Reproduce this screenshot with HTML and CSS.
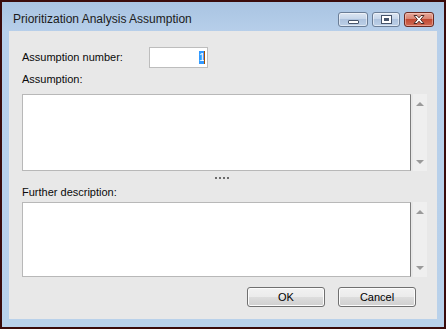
FILE: index.html
```html
<!DOCTYPE html>
<html>
<head>
<meta charset="utf-8">
<link rel="stylesheet" href="styles.css">
</head>
<body>
<div class="window">
  <div class="titlebar">
    <div class="title">Prioritization Analysis Assumption</div>
    <div class="caption-buttons">
      <div class="cap cap-min"><span class="min-glyph"></span></div>
      <div class="cap cap-max"><span class="max-glyph"></span></div>
      <div class="cap cap-close">
        <svg width="16" height="11" viewBox="0 0 16 11">
          <path d="M3 1.5 L6 1.5 L8 3.8 L10 1.5 L13 1.5 L9.6 5.5 L13 9.5 L10 9.5 L8 7.2 L6 9.5 L3 9.5 L6.4 5.5 Z" fill="#ffffff" stroke="#4a2a26" stroke-width="1" stroke-linejoin="round"/>
        </svg>
      </div>
    </div>
  </div>
  <div class="client">
    <div class="row-number">
      <label class="label label-number">Assumption number:</label>
      <div class="num-input"><span class="sel">1</span><span class="caret"></span></div>
    </div>
    <div class="label label-block">Assumption:</div>
    <div class="memo-row memo-1">
      <div class="memo"></div>
      <div class="scrollbar">
        <span class="arrow-up"></span>
        <span class="arrow-down"></span>
      </div>
    </div>
    <div class="splitter"><span></span><span></span><span></span><span></span></div>
    <div class="label label-block2">Further description:</div>
    <div class="memo-row memo-2">
      <div class="memo"></div>
      <div class="scrollbar">
        <span class="arrow-up"></span>
        <span class="arrow-down"></span>
      </div>
    </div>
    <div class="buttons">
      <div class="btn">OK</div>
      <div class="btn">Cancel</div>
    </div>
  </div>
</div>
</body>
</html>
```

FILE: styles.css
```css
html, body {
  margin: 0;
  padding: 0;
  background: #ffffff;
}

.window {
  width: 446px;
  height: 329px;
  box-sizing: border-box;
  border: 2px solid #3a0b0b;
  background: linear-gradient(to bottom, #a9c4e2 0px, #b7cfea 30px, #b9d1ea 100%);
  display: flex;
  flex-direction: column;
  padding: 0 7px 8px 7px;
  font-family: "Liberation Sans", Arial, sans-serif;
}

.titlebar {
  height: 29px;
  display: flex;
  align-items: flex-start;
  justify-content: space-between;
  flex-shrink: 0;
}

.title {
  font-size: 12px;
  color: #1b1b1b;
  padding: 10px 0 0 4px;
  line-height: 15px;
}

.caption-buttons {
  display: flex;
  gap: 4px;
  margin-top: 10px;
  margin-right: 3px;
}

.cap {
  height: 15px;
  box-sizing: border-box;
  border: 1px solid #6a7d96;
  border-radius: 3px;
  display: flex;
  align-items: center;
  justify-content: center;
  background: linear-gradient(to bottom, #dce6f2 0%, #c6d6ea 45%, #aec3de 50%, #bcd0e8 100%);
  box-shadow: inset 0 0 0 1px rgba(255,255,255,0.5);
}

.cap-min { width: 30px; }
.cap-max { width: 28px; }
.cap-close {
  width: 30px;
  border-color: #6b2a22;
  background: linear-gradient(to bottom, #e6a99b 0%, #d98472 45%, #c24a33 50%, #d06b55 100%);
  box-shadow: inset 0 0 0 1px rgba(255,220,210,0.45);
}

.min-glyph {
  width: 9px;
  height: 2px;
  background: #ffffff;
  border: 1px solid #46546a;
  margin-top: 4px;
  border-radius: 1px;
}

.max-glyph {
  width: 5px;
  height: 3px;
  border: 2px solid #ffffff;
  outline: 1px solid #46546a;
  background: #46546a;
}

.client {
  flex: 1;
  background: #e8e8e8;
  padding: 16px 10px 0 13px;
  display: flex;
  flex-direction: column;
  font-family: "Liberation Sans", Arial, sans-serif;
  font-size: 11px;
  color: #0a0a0a;
}

.row-number {
  display: flex;
  align-items: center;
  height: 21px;
}

.label-number {
  width: 127px;
  line-height: 21px;
}

.num-input {
  width: 59px;
  height: 21px;
  box-sizing: border-box;
  border: 1px solid #bdbdbd;
  background: #ffffff;
  display: flex;
  justify-content: flex-end;
  align-items: center;
  padding-right: 2px;
}

.sel {
  background: #3399ff;
  color: #ffffff;
  line-height: 13px;
  width: 5px;
  text-align: center;
  font-size: 11px;
}

.caret {
  width: 1px;
  height: 13px;
  background: #a05000;
}

.label {
  line-height: 15px;
}

.label-block {
  margin-top: 4px;
  height: 15px;
  margin-bottom: 7px;
}

.memo-row {
  display: flex;
  gap: 2px;
}

.memo-1 { height: 77px; }
.memo-2 { height: 75px; }

.memo {
  width: 390px;
  box-sizing: border-box;
  background: #ffffff;
  border: 1px solid #b8b8b8;
  border-right-color: #7c7c7c;
}

.scrollbar {
  width: 14px;
  background: #efefef;
  display: flex;
  flex-direction: column;
  justify-content: space-between;
  align-items: center;
  padding: 8px 0 7px 0;
  box-sizing: border-box;
}

.arrow-up {
  width: 0;
  height: 0;
  border-left: 4px solid transparent;
  border-right: 4px solid transparent;
  border-bottom: 4px solid #9a9a9a;
}

.arrow-down {
  width: 0;
  height: 0;
  border-left: 4px solid transparent;
  border-right: 4px solid transparent;
  border-top: 4px solid #9a9a9a;
}

.splitter {
  height: 14px;
  display: flex;
  justify-content: center;
  align-items: center;
  gap: 2px;
  padding-right: 6px;
}

.splitter span {
  width: 2px;
  height: 2px;
  background: #6c6c6c;
}

.label-block2 {
  height: 15px;
  margin-bottom: 2px;
}

.buttons {
  display: flex;
  justify-content: flex-end;
  gap: 13px;
  margin-top: 10px;
  padding-right: 11px;
}

.btn {
  width: 78px;
  height: 20px;
  box-sizing: border-box;
  border: 1px solid #707070;
  border-radius: 3px;
  background: linear-gradient(to bottom, #f2f2f2 0%, #ebebeb 50%, #dddddd 51%, #cfcfcf 100%);
  box-shadow: inset 0 0 0 1px #fcfcfc;
  display: flex;
  align-items: center;
  justify-content: center;
  line-height: 18px;
  font-size: 11px;
  color: #000000;
}
```
